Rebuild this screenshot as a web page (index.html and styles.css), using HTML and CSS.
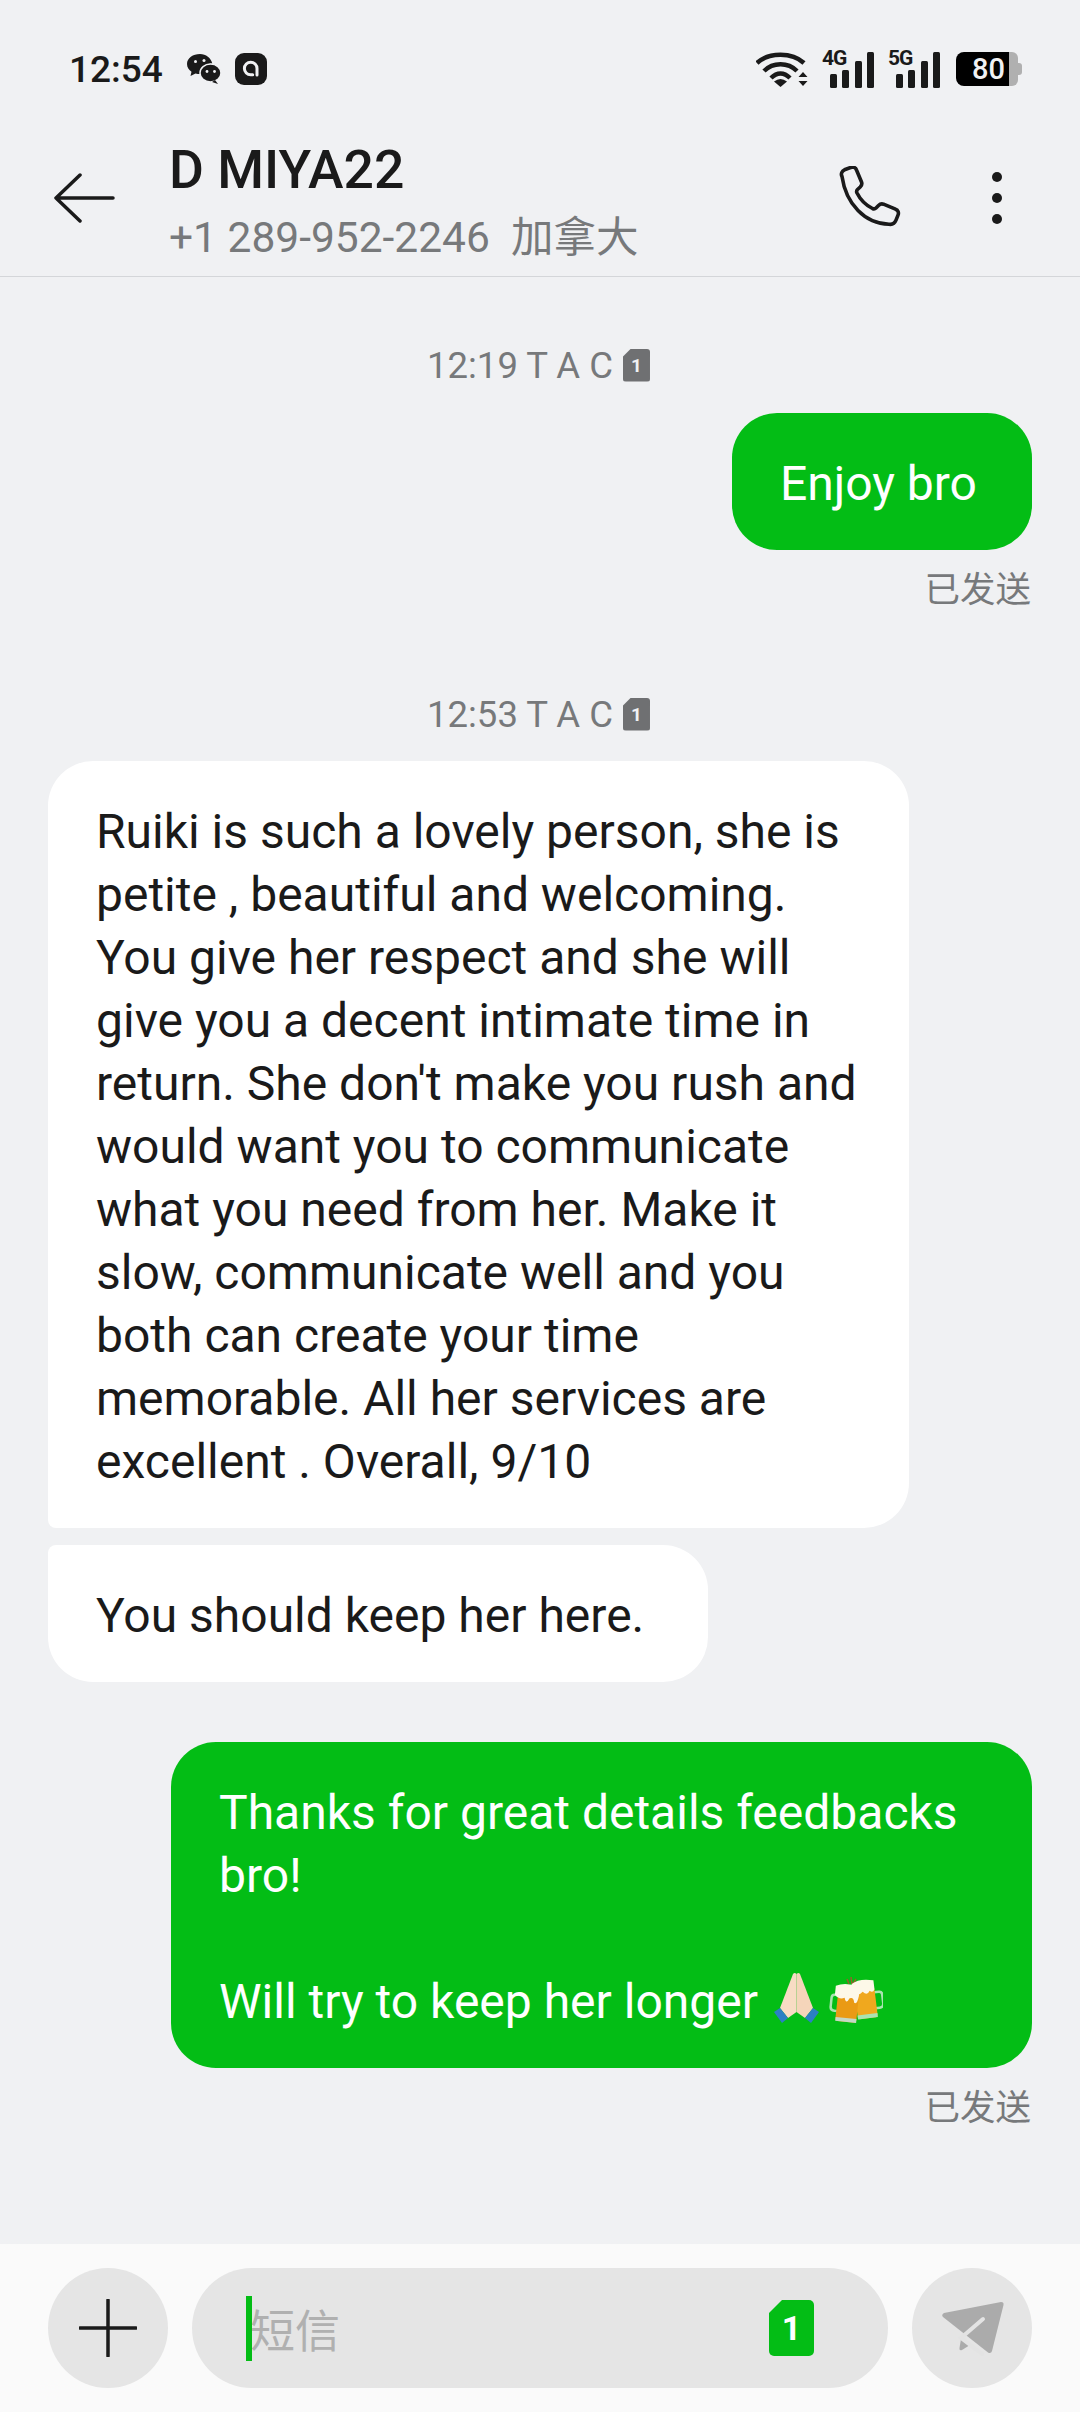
FILE: index.html
```html
<!DOCTYPE html>
<html lang="zh">
<head>
  <meta charset="UTF-8">
  <meta name="viewport" content="width=device-width, initial-scale=1.0">
  <title>D MIYA22</title>
  <link rel="stylesheet" href="styles.css">
</head>
<body>

  <div class="statusbar">
    <span class="clock">12:54</span>
    <svg class="st-wechat" width="34" height="30" viewBox="0 0 34 30">
      <path d="M13 0C6 0 0 4 0 10c0 3.500 2 6 4.500 7.800L3.500 22l5-2.500c1.500.4 3 .6 4.500.6 0-.5 0 0 0 0 C13 14 18 9.500 25.300 9.600 24 4 19 0 13 0z" fill="#1a1a1a"/>
      <ellipse cx="23.500" cy="19" rx="10.500" ry="9" fill="#1a1a1a" stroke="#f0f1f3" stroke-width="1.500"/>
      <path d="M28 26l3 4-6-2z" fill="#1a1a1a"/>
      <circle cx="8.500" cy="7.500" r="1.500" fill="#f0f1f3"/>
      <circle cx="17" cy="6.500" r="1.500" fill="#f0f1f3"/>
      <circle cx="20" cy="17.500" r="1.400" fill="#f0f1f3"/>
      <circle cx="27.500" cy="17.500" r="1.400" fill="#f0f1f3"/>
    </svg>
    <svg class="st-app" width="32" height="32" viewBox="0 0 32 32">
      <rect width="32" height="32" rx="9" fill="#1a1a1a"/>
      <path d="M22 22v-6.500a6.300 6.300 0 1 0-6.300 6.300h2" fill="none" stroke="#f0f1f3" stroke-width="3" stroke-linecap="round"/>
    </svg>
    <div class="status-right">
      <svg width="52" height="36" viewBox="0 0 52 36">
        <path d="M1 12C13 1 36 1 48 12" fill="none" stroke="#1a1a1a" stroke-width="4.500"/>
        <path d="M8 20C17 11 32 11 41 20" fill="none" stroke="#1a1a1a" stroke-width="4.500"/>
        <path d="M15 27C21 21 28 21 34 27" fill="none" stroke="#1a1a1a" stroke-width="4.500"/>
        <path d="M24.500 36L18 30.500q6.500-5 13 0z" fill="#1a1a1a"/>
        <path d="M47 21l4.500 5h-9zM47 35l4.500-5h-9z" fill="#1a1a1a"/>
      </svg>
      <div class="signal">
        <span class="sig-label">4G</span>
        <i class="bar b1"></i><i class="bar b2"></i><i class="bar b3"></i><i class="bar b4"></i>
      </div>
      <div class="signal">
        <span class="sig-label">5G</span>
        <i class="bar b1"></i><i class="bar b2"></i><i class="bar b3"></i><i class="bar b4"></i>
      </div>
      <div class="battery">
        <span class="batt-level">80</span>
        <span class="batt-rest"></span>
        <span class="batt-cap"></span>
      </div>
    </div>
  </div>

  <div class="header">
    <svg class="back" width="62" height="50" viewBox="0 0 62 50">
      <path d="M60 25H3M27 2L3 25l24 23" fill="none" stroke="#1a1a1a" stroke-width="3.500" stroke-linecap="round" stroke-linejoin="round"/>
    </svg>
    <div class="contact">
      <div class="name">D MIYA22</div>
      <div class="number">+1 289-952-2246&nbsp; 加拿大</div>
    </div>
    <svg class="phone" width="64" height="64" viewBox="0 0 64 64">
      <path d="M3 10.500C1.500 8 3 5 5.500 3.800l6-2.300c2.500-1 5-.2 6 2.500l5 12c.8 2 .2 3.500-1.300 5l-2.700 2.500c-1 1-1.200 2-.5 3.500 3.500 7 8.500 12 15.500 15.500 1.500.7 2.500.5 3.500-.5l2.500-2.500c1.500-1.500 3-2 5-1.300l12 5c2.700 1 3.500 3.500 2.500 6l-2 5c-1.200 3-4 4.500-7 4C26 58 7 38 3 10.500z" fill="none" stroke="#1a1a1a" stroke-width="3.600" stroke-linejoin="round"/>
    </svg>
    <div class="more"><i></i><i></i><i></i></div>
  </div>

  <div class="messages">
    <div class="stamp stamp-first">
      <span>12:19 T A C</span><span class="sim-small">1</span>
    </div>
    <div class="bubble out out-short">Enjoy bro</div>
    <div class="sent">已发送</div>

    <div class="stamp stamp-second">
      <span>12:53 T A C</span><span class="sim-small">1</span>
    </div>
    <div class="bubble in in-top">Ruiki is such a lovely person, she is petite , beautiful and welcoming. You give her respect and she will give you a decent intimate time in return. She don't make you rush and would want you to communicate what you need from her. Make it slow, communicate well and you both can create your time memorable. All her services are excellent . Overall, 9/10</div>
    <div class="bubble in in-bottom">You should keep her here.</div>

    <div class="bubble out out-long">Thanks for great details feedbacks bro!<br><br>Will try to keep her longer
      <svg class="emoji emoji-pray" width="45" height="54" viewBox="0 0 45 54">
        <path d="M19 2q1.500-2 3.500 0V40L14 46 6 36z" fill="#f8dcc4"/>
        <path d="M26 2q-1.500-2-3.500 0V40L31 46l8-10z" fill="#f5d5ba"/>
        <path d="M0 40l6-4 8 10-6 5z" fill="#2b80c5"/>
        <path d="M45 40l-6-4-8 10 6 5z" fill="#2b80c5"/>
      </svg>
      <svg class="emoji emoji-beer" width="54" height="50" viewBox="0 0 54 50">
        <path d="M18 3l2 5M22 1l1 7M27 3l-3 5" stroke="#96602a" stroke-width="1.500" fill="none"/>
        <g transform="rotate(-7 40 26)">
          <path d="M46 17h5q3 0 3 3v9q0 4-4 4h-5" fill="none" stroke="#a9e4b0" stroke-width="2.500"/>
          <rect x="27" y="12" width="20" height="30" rx="2" fill="#f0a81e"/>
          <rect x="27" y="38" width="20" height="4" fill="#a9e4b0"/>
          <path d="M25 6q8-5 22-1v9q-2 4-5 1-3 5-7 0-4 4-10 1z" fill="#fdf8e8"/>
        </g>
        <g transform="rotate(6 18 28)">
          <path d="M9 20H5q-3 0-3 3v9q0 4 4 4h4" fill="none" stroke="#a9e4b0" stroke-width="2.500"/>
          <rect x="8" y="15" width="21" height="31" rx="2" fill="#ea9a14"/>
          <rect x="8" y="42" width="21" height="4" fill="#c4d8c6"/>
          <path d="M5 11q10-5 24-1v9q-1 9-4 7-1-6-5-4-3 7-5 0-5 3-10-2z" fill="#fdf8e8"/>
        </g>
      </svg>
    </div>
    <div class="sent">已发送</div>
  </div>

  <div class="composer">
    <div class="round-btn">
      <svg width="58" height="58" viewBox="0 0 58 58">
        <path d="M29 1v56M1 29h56" stroke="#1a1a1a" stroke-width="3.500" stroke-linecap="round"/>
      </svg>
    </div>
    <div class="input">
      <i class="cursor"></i>
      <span class="placeholder">短信</span>
      <span class="sim-big">1</span>
    </div>
    <div class="round-btn send">
      <svg width="120" height="120" viewBox="0 0 120 120">
        <path d="M32 45L89 34q3 0 2.500 3L80 83q-1 3-4 1.500L31 49q-2-2 1-4z" fill="#ababab"/>
        <path d="M49 71l9 6-8 5q-3 1-2.500-2z" fill="#ababab"/>
        <path d="M71 51L49 70l21 16" fill="none" stroke="#e3e3e3" stroke-width="4" stroke-linecap="round"/>
      </svg>
    </div>
  </div>

</body>
</html>
```

FILE: styles.css
```css
* {
  box-sizing: border-box;
}

body {
  margin: 0;
  width: 1080px;
  height: 2412px;
  display: flex;
  flex-direction: column;
  background-color: #f0f1f3;
  color: #1a1a1a;
  font-family: Roboto, "Noto Sans CJK SC", sans-serif;
  overflow: hidden;
}

.statusbar {
  height: 120px;
  padding: 18px 58px 0 69px;
  display: flex;
  align-items: center;
  flex-shrink: 0;
}

.clock {
  font-size: 37px;
  font-weight: 500;
  width: 118px;
}

.st-app {
  margin-left: 14px;
}

.status-right {
  margin-left: auto;
  display: flex;
  align-items: center;
  gap: 14px;
}

.signal {
  position: relative;
  width: 52px;
  height: 38px;
  display: flex;
  align-items: flex-end;
  justify-content: flex-end;
  gap: 5.5px;
}

.sig-label {
  position: absolute;
  left: 0;
  top: -5px;
  font-size: 21px;
  font-weight: 700;
  letter-spacing: -1px;
  line-height: 26px;
}

.bar {
  width: 7px;
  background-color: #1a1a1a;
  border-radius: 1.5px;
}

.b1 { height: 14px; }
.b2 { height: 18px; }
.b3 { height: 27px; }
.b4 { height: 36px; }

.battery {
  display: flex;
  align-items: center;
  height: 34px;
  margin-left: 2px;
}

.batt-level {
  width: 53px;
  height: 34px;
  background-color: #000;
  color: #f0f1f3;
  border-radius: 8px 0 0 8px;
  font-size: 29px;
  font-weight: 500;
  line-height: 35px;
  text-align: right;
  padding-right: 4px;
}

.batt-rest {
  width: 9px;
  height: 34px;
  background-color: #b0b0b0;
  border-radius: 0 6px 6px 0;
}

.batt-cap {
  width: 4px;
  height: 12px;
  background-color: #b0b0b0;
  border-radius: 0 3px 3px 0;
}

.header {
  height: 157px;
  display: flex;
  align-items: center;
  flex-shrink: 0;
  padding: 0 78px 0 53px;
  border-bottom: 1.5px solid #d4d6d9;
}

.contact {
  align-self: flex-start;
  margin-left: 54px;
  padding-top: 20px;
}

.name {
  font-size: 53.500px;
  font-weight: 500;
  line-height: 60px;
}

.number {
  margin-top: 11px;
  font-size: 42.500px;
  line-height: 54px;
  color: #77797b;
  white-space: nowrap;
}

.phone {
  margin-left: auto;
  margin-right: 89px;
}

.more {
  display: flex;
  flex-direction: column;
  gap: 10.5px;
}

.more i {
  width: 10.5px;
  height: 10.5px;
  border-radius: 50%;
  background-color: #1a1a1a;
}

.messages {
  flex: 1;
  display: flex;
  flex-direction: column;
  align-items: flex-start;
  padding: 0 48px;
}

.stamp {
  align-self: center;
  display: flex;
  align-items: center;
  gap: 10px;
  height: 44px;
  padding-right: 3px;
  font-size: 36.500px;
  color: #77797b;
}

.stamp-first {
  margin-top: 66px;
  margin-bottom: 26px;
}

.stamp-second {
  margin-top: 80px;
  margin-bottom: 25px;
}

.sim-small {
  width: 27px;
  height: 33px;
  background-color: #6f7072;
  color: #f0f1f3;
  border-radius: 3px;
  clip-path: polygon(8px 0, 100% 0, 100% 100%, 0 100%, 0 8px);
  font-size: 19px;
  font-weight: 700;
  line-height: 34px;
  text-align: center;
}

.bubble {
  max-width: 861px;
  padding: 39px 50px 35px 48px;
  border-radius: 45px;
  font-size: 48px;
  line-height: 63px;
}

.bubble.out {
  align-self: flex-end;
  background-color: #03bd15;
  color: #fff;
}

.bubble.in {
  background-color: #fff;
}

.out-short {
  padding-right: 55px;
}

.in-top {
  border-bottom-left-radius: 8px;
}

.in-bottom {
  margin-top: 17px;
  padding-right: 64px;
  border-top-left-radius: 8px;
}

.out-long {
  margin-top: 60px;
}

.emoji {
  vertical-align: -8px;
}

.emoji-pray {
  margin-left: 4px;
}

.emoji-beer {
  margin-left: -2px;
}

.sent {
  align-self: flex-end;
  margin-top: 18px;
  padding-right: 1px;
  font-size: 35.500px;
  line-height: 44px;
  color: #77797b;
}

.composer {
  height: 168px;
  flex-shrink: 0;
  padding: 24px 48px;
  display: flex;
  gap: 24px;
  background-color: #fafafa;
}

.round-btn {
  width: 120px;
  height: 120px;
  border-radius: 50%;
  background-color: #e5e5e5;
  display: flex;
  align-items: center;
  justify-content: center;
  flex-shrink: 0;
}

.input {
  flex: 1;
  height: 120px;
  border-radius: 60px;
  background-color: #e5e5e5;
  display: flex;
  align-items: center;
  padding: 0 74px 0 54px;
}

.cursor {
  width: 6px;
  height: 65px;
  margin-right: -2px;
  background-color: #03bd15;
  position: relative;
}

.placeholder {
  font-size: 45px;
  color: #b0b0b0;
}

.sim-big {
  margin-left: auto;
  width: 45px;
  height: 56px;
  background-color: #03bd15;
  color: #fff;
  border-radius: 5px;
  clip-path: polygon(13px 0, 100% 0, 100% 100%, 0 100%, 0 13px);
  font-size: 34px;
  font-weight: 700;
  line-height: 57px;
  text-align: center;
}
```
